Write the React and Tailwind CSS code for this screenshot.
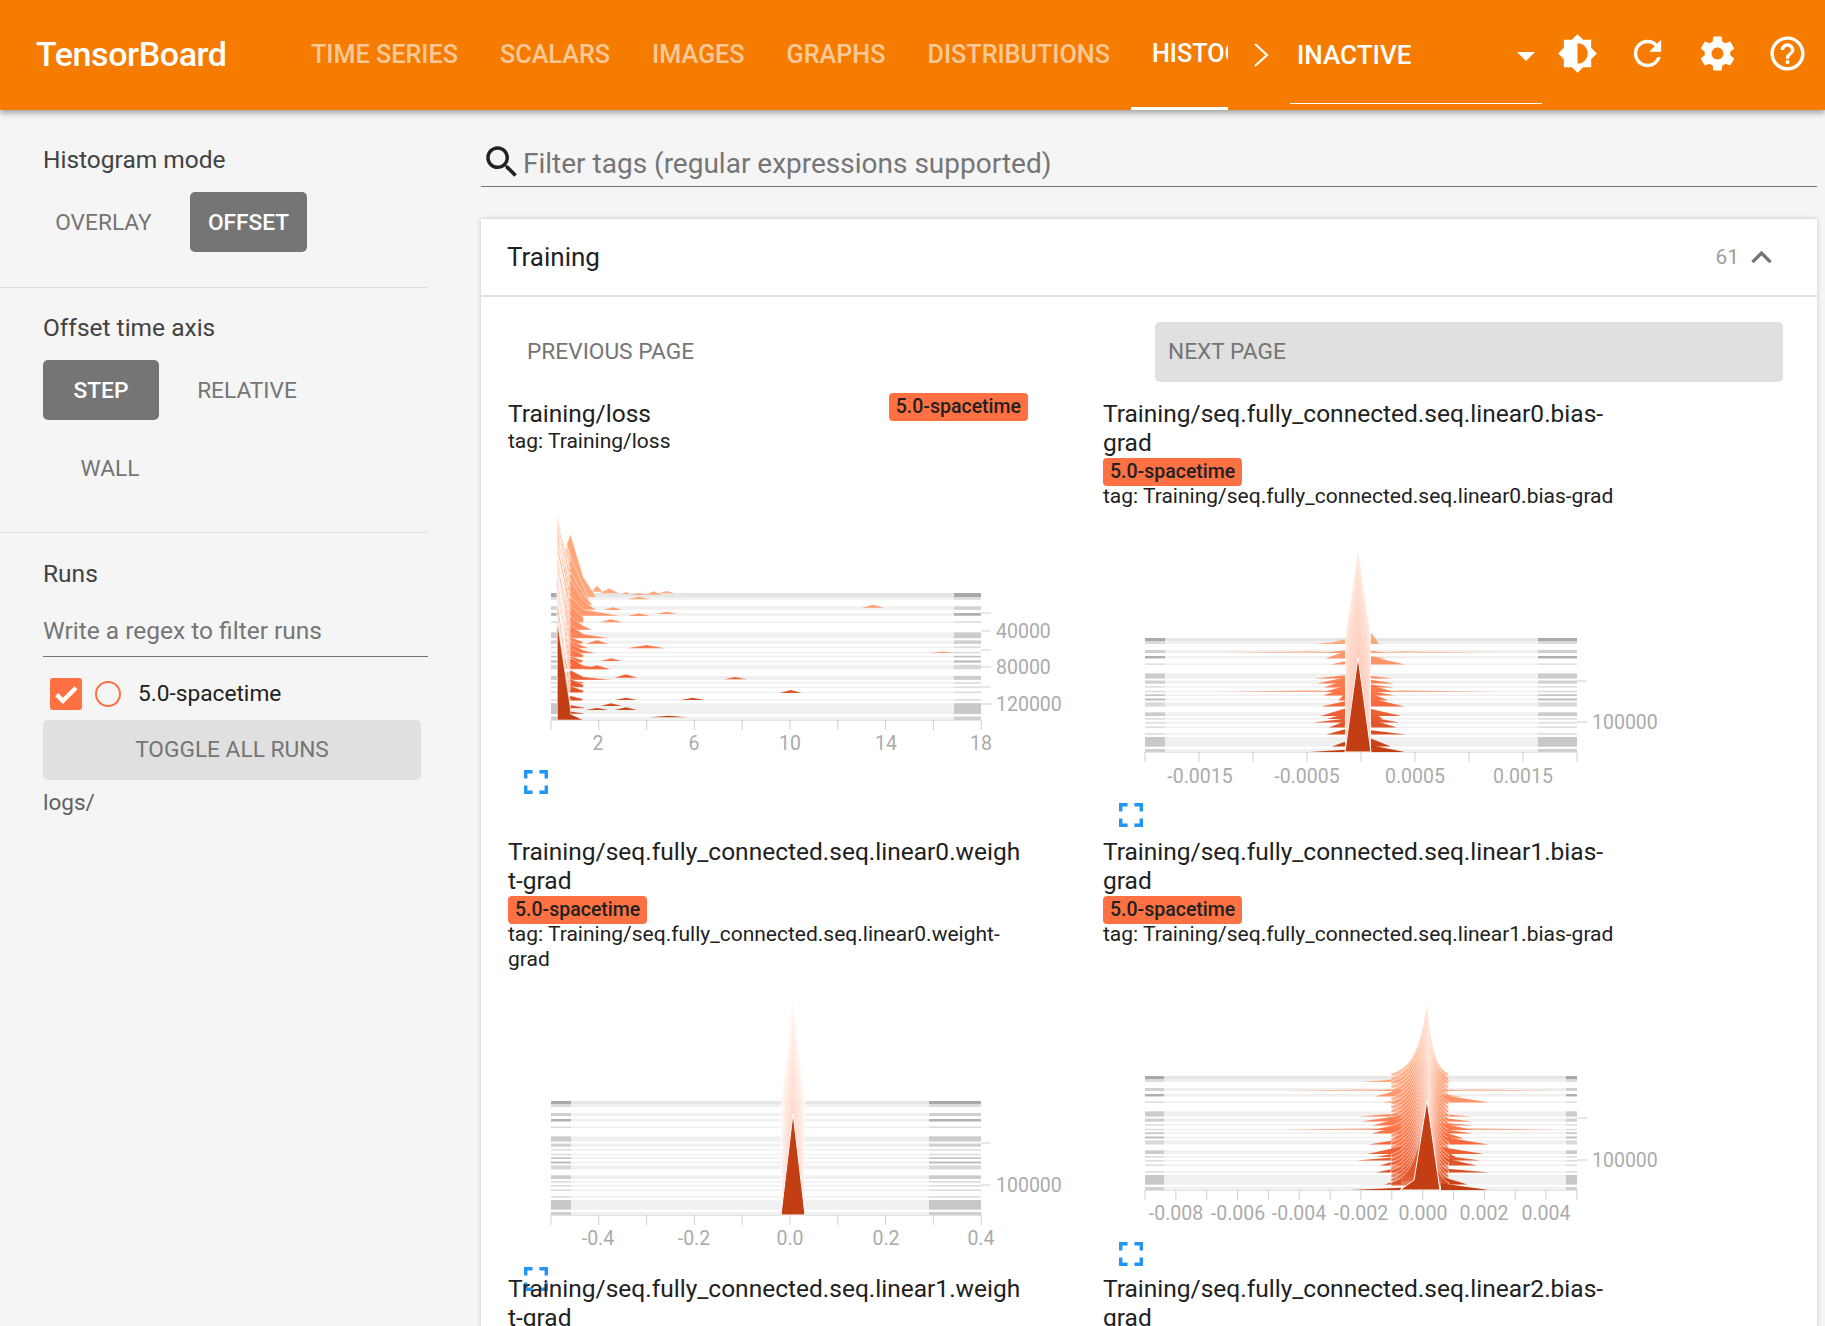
import React from 'react';

const NAV_TABS = ['TIME SERIES', 'SCALARS', 'IMAGES', 'GRAPHS', 'DISTRIBUTIONS'];

const ICONS = {
  brightness: 'M20 15.31L23.31 12 20 8.69V4h-4.69L12 .69 8.69 4H4v4.69L.69 12 4 15.31V20h4.69L12 23.31 15.31 20H20v-4.69zM12 18V6c3.31 0 6 2.69 6 6s-2.69 6-6 6z',
  refresh: 'M17.65 6.35C16.2 4.9 14.21 4 12 4c-4.42 0-7.99 3.58-7.99 8s3.57 8 7.99 8c3.73 0 6.84-2.55 7.73-6h-2.08c-.82 2.33-3.04 4-5.65 4-3.31 0-6-2.69-6-6s2.69-6 6-6c1.66 0 3.14.69 4.22 1.78L13 11h7V4l-2.35 2.35z',
  settings: 'M19.43 12.98c.04-.32.07-.64.07-.98s-.03-.66-.07-.98l2.11-1.65c.19-.15.24-.42.12-.64l-2-3.46c-.12-.22-.39-.3-.61-.22l-2.49 1c-.52-.4-1.08-.73-1.69-.98l-.38-2.65C14.46 2.18 14.25 2 14 2h-4c-.25 0-.46.18-.49.42l-.38 2.65c-.61.25-1.17.59-1.69.98l-2.49-1c-.23-.09-.49 0-.61.22l-2 3.46c-.13.22-.07.49.12.64l2.11 1.65c-.04.32-.07.65-.07.98s.03.66.07.98l-2.11 1.65c-.19.15-.24.42-.12.64l2 3.46c.12.22.39.3.61.22l2.49-1c.52.4 1.08.73 1.69.98l.38 2.65c.03.24.24.42.49.42h4c.25 0 .46-.18.49-.42l.38-2.65c.61-.25 1.17-.59 1.69-.98l2.49 1c.23.09.49 0 .61-.22l2-3.46c.12-.22.07-.49-.12-.64l-2.11-1.65zM12 15.5c-1.93 0-3.5-1.57-3.5-3.5s1.57-3.5 3.5-3.5 3.5 1.57 3.5 3.5-1.57 3.5-3.5 3.5z',
  help: 'M11 18h2v-2h-2v2zm1-16C6.48 2 2 6.48 2 12s4.48 10 10 10 10-4.48 10-10S17.52 2 12 2zm0 18c-4.41 0-8-3.59-8-8s3.59-8 8-8 8 3.59 8 8-3.59 8-8 8zm0-14c-2.21 0-4 1.79-4 4h2c0-1.1.9-2 2-2s2 .9 2 2c0 2-3 1.75-3 5h2c0-2.25 3-2.5 3-5 0-2.21-1.79-4-4-4z',
  search: 'M15.5 14h-.79l-.28-.27C15.41 12.59 16 11.11 16 9.5 16 5.91 13.09 3 9.5 3S3 5.91 3 9.5 5.91 16 9.5 16c1.61 0 3.09-.59 4.23-1.57l.27.28v.79l5 4.99L20.49 19l-4.99-5zm-6 0C7.01 14 5 11.99 5 9.5S7.01 5 9.5 5 14 7.01 14 9.5 11.99 14 9.5 14z',
  less: 'M12 8l-6 6 1.41 1.41L12 10.83l4.59 4.58L18 14z',
};

const MatIcon = ({ name, className }) => (
  <svg viewBox="0 0 24 24" fill="currentColor" className={className}>
    <path d={ICONS[name]} />
  </svg>
);

const ExpandIcon = () => (
  <svg viewBox="5 5 14 14" fill="#2196f3" className="w-[24px] h-[24px] ml-[16px] shrink-0">
    <path d="M7 14H5v5h5v-2H7v-3zm-2-4h2V7h3V5H5v5zm12 7h-3v2h5v-5h-2v3zM14 5v2h3v3h2V5h-5z" />
  </svg>
);

// band tops and heights measured on the first chart, top band = 0, last = 1
const BANDS = [
  [0, 12, '#a9a9a9'], [12, 8, '#dcdcdc'], [40, 10, '#d0d0d0'], [60, 8, '#b0b0b0'], [85, 3, '#dedede'],
  [118, 17, '#cccccc'], [142, 10, '#cfcfcf'], [160, 5, '#dedede'], [176, 4, '#dddddd'], [188, 4, '#c0c0c0'],
  [202, 6, '#bbbbbb'], [215, 13, '#d8d8d8'], [248, 12, '#cccccc'], [267, 3, '#dddddd'], [280, 2, '#dddddd'],
  [295, 3, '#dddddd'], [317, 5, '#dddddd'], [330, 32, '#c8c8c8'], [370, 10, '#cfcfcf'],
];

const STOPS = [[255, 171, 128], [255, 112, 67], [196, 62, 20]];
const ridgeColor = (t) => {
  const seg = t < 0.55 ? 0 : 1;
  const k = seg === 0 ? t / 0.55 : (t - 0.55) / 0.45;
  const [a, b] = [STOPS[seg], STOPS[seg + 1]];
  return `rgb(${a.map((v, i) => Math.round(v + (b[i] - v) * k)).join(',')})`;
};

const rnd = (i, j) => {
  const s = Math.sin(i * 12.9898 + j * 78.233) * 43758.5453;
  return s - Math.floor(s);
};

const poly = (pts) => pts.map((p) => p.join(',')).join(' ');

// shapes of the loss chart, in zoomed units of the measurement crop
const LOSS_ROWS = [
  [322, 190, 70], [330, 130, 50], [345, 100, 60], [360, 90, 70], [378, 60, 140], [398, 50, 35],
  [420, 40, 60], [445, 40, 110], [462, 20, 30], [475, 22, 50], [490, 30, 70], [502, 25, 35], [518, 20, 30],
  [538, 35, 110], [570, 30, 115], [580, 10, 35], [592, 25, 35], [608, 20, 35], [632, 15, 30], [655, 10, 40], [672, 8, 35],
];
const LOSS_BUMPS = [
  [262, 305, 15, 18], [295, 310, 25, 15], [340, 312, 12, 6], [375, 315, 25, 5], [415, 314, 22, 10], [450, 310, 22, 7],
  [375, 328, 30, 8], [305, 360, 25, 8], [1007, 353, 30, 9], [375, 378, 30, 8], [450, 372, 28, 7], [300, 397, 30, 9],
  [262, 461, 30, 10], [395, 475, 50, 10], [1195, 488, 35, 3], [300, 513, 28, 8], [262, 538, 35, 12], [340, 563, 30, 10],
  [635, 568, 30, 7], [785, 609, 30, 9], [340, 630, 30, 7], [520, 630, 32, 7], [300, 648, 28, 8], [262, 660, 30, 6],
  [340, 660, 30, 8], [455, 682, 50, 5],
];

const lossShapes = () => {
  const X = (z) => z / 2.7 - 8;
  const Y = (z) => z / 3 + 36;
  const tOf = (z) => (z - 310) / 380;
  const items = [];
  LOSS_ROWS.forEach(([by, sh, len]) => {
    const apex = 75 + Math.max(tOf(by) - 0.03, 0) * 325;
    items.push({
      by,
      el: (
        <polygon
          key={`r${by}`}
          points={poly([
            [X(155), Y(by)], [X(155), Y(apex)], [X(175), Y(by - sh * 0.75)], [X(190), Y(by - sh)], [X(225), Y(by - sh * 0.32)], [X(190 + len), Y(by)],
          ])}
          fill={ridgeColor(tOf(by))}
          stroke="#fff"
          strokeWidth="0.7"
          strokeOpacity="0.6"
        />
      ),
    });
  });
  LOSS_BUMPS.forEach(([x, by, w, bh]) => {
    items.push({
      by,
      el: (
        <polygon
          key={`b${x}-${by}`}
          points={poly([[X(x - w), Y(by)], [X(x), Y(by - bh)], [X(x + w), Y(by)]])}
          fill={ridgeColor(tOf(by))}
        />
      ),
    });
  });
  items.sort((a, b) => a.by - b.by);
  const fan = Array.from({ length: 26 }, (_, i) => {
    const t = i / 25;
    return (
      <line
        key={`f${i}`}
        x1={X(155 + rnd(i, 3) * 6)}
        y1={Y(75 + t * 325)}
        x2={X(190)}
        y2={Y(200 + t * 455)}
        stroke="#fff"
        strokeWidth="1"
        strokeOpacity="0.75"
      />
    );
  });
  return (
    <>
      {items.map((it) => it.el)}
      {fan}
      <polygon
        points={poly([[X(155), Y(690)], [X(155), Y(400)], [X(190), Y(655)], [X(190), Y(672)], [X(225), Y(690)]])}
        fill="#c43e14"
        stroke="#fff"
        strokeWidth="0.5"
      />
    </>
  );
};

const spikeShapes = ({ cx, top, bottom, peak, frontApex, half, frontL = half, frontR = half, wingL = half, wingR = half, wingMax, longRows = [], longLen = 0, curved, fanOpacity, kink }) => {
  const span = bottom - top;
  const items = [];
  for (let i = 0; i < 28; i++) {
    const t = i / 28;
    const by = top + t * span;
    const apex = peak + t * (frontApex - peak);
    const H = by - apex;
    let pts;
    if (curved) {
      const w = half * 1.8;
      const left = [];
      for (let k = 0; k <= 10; k++) {
        const dx = (k / 10) * w;
        left.push([dx, H * Math.exp(-dx / (half * 0.55))]);
      }
      pts = [
        ...left.slice().reverse().map(([dx, y]) => [cx - dx, by - y]),
        ...left.slice(1).map(([dx, y]) => [cx + dx * 0.6, by - y]),
      ];
      pts.unshift([cx - w, by]);
      pts.push([cx + w * 0.6, by]);
    } else {
      pts = [[cx - half, by], [cx, apex], [cx + half, by]];
    }
    items.push({
      by,
      el: (
        <polygon
          key={`s${i}`}
          points={poly(pts)}
          fill={ridgeColor(t * 0.8)}
          fillOpacity={fanOpacity}
          stroke="#fff"
          strokeWidth="0.7"
          strokeOpacity="0.8"
        />
      ),
    });
  }
  if (wingMax > 0) {
    BANDS.forEach(([y, h], i) => {
      const by = top + ((y + h) / 380) * span;
      const t = (y + h) / 380;
      const lenL = 6 + rnd(i, 1) * wingMax;
      const lenR = 6 + rnd(i, 2) * wingMax;
      const hL = 2 + rnd(i, 5) * 6;
      const hR = 2 + rnd(i, 6) * 7;
      const isLong = longRows.includes(i);
      const wings = [
        [[cx - wingL, by], [cx - wingL, by - hL], [cx - wingL - lenL, by]],
        [[cx + wingR, by], [cx + wingR, by - hR], [cx + wingR + lenR, by]],
      ];
      const long = isLong
        ? [
            [[cx - wingL - longLen, by], [cx - wingL - longLen * 0.25, by - 1.8], [cx - wingL, by]],
            [[cx + wingR, by], [cx + wingR + longLen * 0.25, by - 1.8], [cx + wingR + longLen, by]],
          ]
        : [];
      items.push({
        by,
        el: (
          <g key={`w${i}`}>
            {long.map((w, k) => <polygon key={k} points={poly(w)} fill={ridgeColor(t)} fillOpacity="0.55" />)}
            {wings.map((w, k) => <polygon key={k} points={poly(w)} fill={ridgeColor(t)} />)}
          </g>
        ),
      });
    });
  }
  items.sort((a, b) => a.by - b.by);
  const front = kink
    ? [[cx - frontL, bottom], [cx - frontL + kink[0], bottom - kink[1]], [cx, frontApex], [cx + frontR, bottom]]
    : [[cx - frontL, bottom], [cx, frontApex], [cx + frontR, bottom]];
  return (
    <>
      {items.map((it) => it.el)}
      <polygon points={poly(front)} fill="#c43e14" stroke="#fff" strokeWidth="1" />
    </>
  );
};

const Ridge = ({ className = '', height, left, right, top, bottom, marginL, marginR, xTicks, xLabels, labelY, yTicks, yLabels, shapes }) => {
  const span = bottom - top;
  return (
    <svg width="560" height={height} className={`block shrink-0 overflow-visible ${className}`}>
      {BANDS.map(([y, h, dark], i) => {
        const by = top + (y / 380) * span;
        const bh = Math.max((h / 380) * span, 1.5);
        return (
          <g key={i}>
            <rect x={left} y={by} width={right - left} height={bh} fill={i === 0 ? '#e6e6e6' : '#f0f0f0'} />
            <rect x={left} y={by} width={marginL} height={bh} fill={dark} />
            <rect x={right - marginR} y={by} width={marginR} height={bh} fill={dark} />
          </g>
        );
      })}
      <line x1={left} x2={right} y1={bottom + 0.5} y2={bottom + 0.5} stroke="#e4e4e4" />
      {shapes}
      {xTicks.map((x) => (
        <line key={x} x1={x} x2={x} y1={bottom} y2={bottom + 10} stroke="#cfcfcf" />
      ))}
      {xLabels.map(([x, label]) => (
        <text key={label} x={x} y={labelY} textAnchor="middle" dominantBaseline="central" fill="#ababab" fontSize="19.5" fontFamily="Roboto, sans-serif">
          {label}
        </text>
      ))}
      {yTicks.map((y) => (
        <line key={y} x1={right} x2={right + 10} y1={y} y2={y} stroke="#cfcfcf" />
      ))}
      {yLabels.map(([y, label]) => (
        <text key={label} x={right + 15} y={y} dominantBaseline="central" fill="#ababab" fontSize="19.5" fontFamily="Roboto, sans-serif">
          {label}
        </text>
      ))}
    </svg>
  );
};

const Badge = () => (
  <span className="inline-block h-[28px] leading-[27px] px-[7px] rounded-[4px] bg-[#ff7043] text-[#212121] text-[19.5px] font-medium">
    5.0-spacetime
  </span>
);

const HistogramCard = ({ title, tag, inlineBadge, chart }) => (
  <div className="h-[437.5px] flex flex-col">
    {inlineBadge ? (
      <div className="w-[520px] flex items-start justify-between">
        <div className="text-[24.5px] leading-[29px] text-[#212121]">{title}</div>
        <div className="-mt-[6px]"><Badge /></div>
      </div>
    ) : (
      <>
        <div className="w-[516px] text-[24.5px] leading-[29px] text-[#212121] break-words">{title}</div>
        <div className="h-[25px] mt-[1px]"><Badge /></div>
      </>
    )}
    <div className="w-[520px] mt-[1px] text-[21px] leading-[25px] text-[#212121] break-words">tag: {tag}</div>
    {chart}
    <div className="mt-[4px]"><ExpandIcon /></div>
  </div>
);

const range = (start, step, n) => Array.from({ length: n }, (_, i) => start + i * step);

const CHARTS = {
  loss: (
    <Ridge
      height={312}
      left={43}
      right={473}
      top={139}
      bottom={266}
      marginL={7}
      marginR={27}
      xTicks={range(43, 47.8, 10)}
      xLabels={[[90, '2'], [186, '6'], [282, '10'], [378, '14'], [473, '18']]}
      labelY={289}
      yTicks={[159, 177, 196, 213, 233, 250]}
      yLabels={[[177, '40000'], [213, '80000'], [250, '120000']]}
      shapes={lossShapes()}
    />
  ),
  bias0: (
    <Ridge
      className="mt-[2px]"
      height={288}
      left={42}
      right={474}
      top={127}
      bottom={241}
      marginL={20}
      marginR={39}
      xTicks={range(42, 54, 9)}
      xLabels={[[97, '-0.0015'], [204, '-0.0005'], [312, '0.0005'], [420, '0.0015']]}
      labelY={265}
      yTicks={[170, 211]}
      yLabels={[[211, '100000']]}
      shapes={spikeShapes({ cx: 255, top: 127, bottom: 241, peak: 38, frontApex: 146, half: 13, wingMax: 30, longRows: [2, 8], longLen: 125, fanOpacity: 0.38 })}
    />
  ),
  weight0: (
    <Ridge
      className="mt-[1px]"
      height={290}
      left={43}
      right={473}
      top={128}
      bottom={242}
      marginL={20}
      marginR={52}
      xTicks={range(43, 47.8, 10)}
      xLabels={[[90, '-0.4'], [186, '-0.2'], [282, '0.0'], [378, '0.2'], [473, '0.4']]}
      labelY={265}
      yTicks={[170, 212]}
      yLabels={[[212, '100000']]}
      shapes={spikeShapes({ cx: 285, top: 128, bottom: 242, peak: 25, frontApex: 140, half: 12, wingMax: 0, fanOpacity: 0.12 })}
    />
  ),
  bias1: (
    <Ridge
      className="mt-[1px]"
      height={290}
      left={42}
      right={474}
      top={128}
      bottom={242}
      marginL={19}
      marginR={11}
      xTicks={range(42, 30.85, 15)}
      xLabels={[[73, '-0.008'], [135, '-0.006'], [196, '-0.004'], [258, '-0.002'], [320, '0.000'], [381, '0.002'], [443, '0.004']]}
      labelY={265}
      yTicks={[170, 212]}
      yLabels={[[212, '100000']]}
      shapes={spikeShapes({ cx: 324, top: 128, bottom: 242, peak: 57, frontApex: 152, half: 20, frontL: 27, frontR: 13, wingL: 26, wingR: 14, wingMax: 45, longRows: [2, 8], longLen: 120, curved: true, fanOpacity: 0.75, kink: [14, 10] })}
    />
  ),
};

const ToggleButton = ({ active, className = '', children }) => (
  <button
    className={`h-[60px] pt-[2px] rounded-[5px] text-[22.7px] ${active ? 'bg-[#757575] text-white font-medium' : 'text-[#757575]'} ${className}`}
  >
    {children}
  </button>
);

const Sidebar = () => (
  <aside className="w-[481px] shrink-0 text-[24.5px]">
    <div className="w-[428px] h-[178px] border-b border-[#e0e0e0]">
      <div className="pl-[43px] pt-[35px] h-[82px] leading-[29px] text-[#424242]">Histogram mode</div>
      <div className="flex pl-[39px] gap-[22px]">
        <ToggleButton className="w-[129px]">OVERLAY</ToggleButton>
        <ToggleButton active className="w-[117px]">OFFSET</ToggleButton>
      </div>
    </div>
    <div className="w-[428px] h-[245px] border-b border-[#e0e0e0]">
      <div className="pl-[43px] pt-[25px] h-[72px] leading-[29px] text-[#424242]">Offset time axis</div>
      <div className="flex pl-[43px] gap-[21px]">
        <ToggleButton active className="w-[116px]">STEP</ToggleButton>
        <ToggleButton className="w-[134px]">RELATIVE</ToggleButton>
      </div>
      <ToggleButton className="w-[116px] ml-[52px] mt-[18px]">WALL</ToggleButton>
    </div>
    <div className="pl-[43px]">
      <div className="pt-[26px] leading-[29px] text-[#424242]">Runs</div>
      <div className="w-[385px] h-[54px] mt-[15px] pt-[13px] leading-[29px] text-[#757575] border-b border-[#757575]">Write a regex to filter runs</div>
      <div className="flex items-center h-[63px] pt-[11px] pl-[7px]">
        <span className="w-[32px] h-[32px] rounded-[3px] bg-[#ff7043] flex items-center justify-center">
          <svg viewBox="0 0 24 24" className="w-[30px] h-[30px]" fill="none" stroke="#fff" strokeWidth="3.4">
            <path d="M4.5 12.5l5 5L20 7" />
          </svg>
        </span>
        <span className="w-[26px] h-[26px] ml-[13px] rounded-full border-[2.5px] border-[#ff7043]" />
        <span className="ml-[17px] text-[22.7px] text-[#212121]">5.0-spacetime</span>
      </div>
      <button className="w-[378px] h-[60px] rounded-[5px] bg-[#e0e0e0] text-[22.7px] text-[#757575]">TOGGLE ALL RUNS</button>
      <div className="mt-[8px] leading-[29px] text-[22.5px] text-[#616161]">logs/</div>
    </div>
  </aside>
);

export default function App() {
  return (
    <div className="h-screen overflow-hidden bg-[#f5f5f5] [font-family:Roboto,sans-serif]">
      <header className="relative z-10 h-[110px] bg-[#f57c00] flex items-center text-white shadow-[0_3px_6px_rgba(0,0,0,0.35)]">
        <div className="w-[290px] pl-[36px] text-[34px] font-medium tracking-[-0.4px] -mt-[1px]">TensorBoard</div>
        <nav className="w-[938px] h-full flex overflow-hidden text-[25.2px] font-medium">
          {NAV_TABS.map((t) => (
            <span key={t} className="px-[21px] flex items-center shrink-0 text-white/60 pb-[1px]">{t}</span>
          ))}
          <span className="px-[21px] flex items-center shrink-0 border-b-[3px] border-white">HISTOGRAMS</span>
        </nav>
        <svg viewBox="0 0 16 24" className="w-[16px] h-[24px] ml-[25px] shrink-0" fill="none" stroke="#fff" strokeWidth="2.2">
          <path d="M2 1l12 11L2 23" />
        </svg>
        <div className="ml-[21px] w-[252px] h-[50px] border-b border-white flex items-start justify-between pl-[7px] pr-[7px] self-start mt-[54px] shrink-0">
          <span className="text-[26px] font-medium -mt-[18px]">INACTIVE</span>
          <span className="w-0 h-0 -mt-[2px] border-x-[9px] border-x-transparent border-t-[9px] border-t-white" />
        </div>
        <div className="flex ml-[15px] -mt-[4px]">
          <MatIcon name="brightness" className="w-[41px] h-[41px] mr-[29px]" />
          <MatIcon name="refresh" className="w-[41px] h-[41px] mr-[29px]" />
          <MatIcon name="settings" className="w-[41px] h-[41px] mr-[29px]" />
          <MatIcon name="help" className="w-[41px] h-[41px]" />
        </div>
      </header>
      <div className="flex">
        <Sidebar />
        <main className="w-[1336px]">
          <div className="h-[77px] pt-[27px] flex items-end border-b border-[#757575] text-[28px] text-[#757575]">
            <MatIcon name="search" className="w-[42px] h-[42px] mb-[3px] text-[#212121] shrink-0" />
            <span className="mb-[4px] leading-[36px]">Filter tags (regular expressions supported)</span>
          </div>
          <section className="mt-[32px] h-[1110px] bg-white shadow-[0_0_5px_rgba(0,0,0,0.2)]">
            <div className="h-[78px] flex items-center justify-between pl-[26px] pr-[35px] border-b-[2px] border-[#e0e0e0]">
              <span className="text-[26px] text-[#212121]">Training</span>
              <span className="flex items-center text-[#9e9e9e] text-[21px] pt-[1px]">
                61
                <MatIcon name="less" className="w-[41px] h-[41px] ml-[2px] text-[#757575]" />
              </span>
            </div>
            <div className="flex h-[60px] mt-[25px] pl-[46px]">
              <button className="w-[168px] whitespace-nowrap pt-[1px] text-[22.7px] text-[#757575] text-left">PREVIOUS PAGE</button>
              <button className="w-[628px] ml-[460px] h-[60px] pt-[1px] rounded-[5px] bg-[#e0e0e0] text-[22.7px] text-[#757575] text-left pl-[13px]">NEXT PAGE</button>
            </div>
            <div className="grid grid-cols-[595px_595px] auto-rows-[437.5px] pl-[27px] mt-[17px]">
              <HistogramCard inlineBadge title="Training/loss" tag="Training/loss" chart={CHARTS.loss} />
              <HistogramCard title="Training/seq.fully_connected.seq.linear0.bias-grad" tag="Training/seq.fully_connected.seq.linear0.bias-grad" chart={CHARTS.bias0} />
              <HistogramCard title="Training/seq.fully_connected.seq.linear0.weight-grad" tag="Training/seq.fully_connected.seq.linear0.weight-grad" chart={CHARTS.weight0} />
              <HistogramCard title="Training/seq.fully_connected.seq.linear1.bias-grad" tag="Training/seq.fully_connected.seq.linear1.bias-grad" chart={CHARTS.bias1} />
              <div className="text-[24.5px] leading-[29px] text-[#212121] w-[516px] break-words">Training/seq.fully_connected.seq.linear1.weight-grad</div>
              <div className="text-[24.5px] leading-[29px] text-[#212121] w-[516px] break-words">Training/seq.fully_connected.seq.linear2.bias-grad</div>
            </div>
          </section>
        </main>
      </div>
    </div>
  );
}
